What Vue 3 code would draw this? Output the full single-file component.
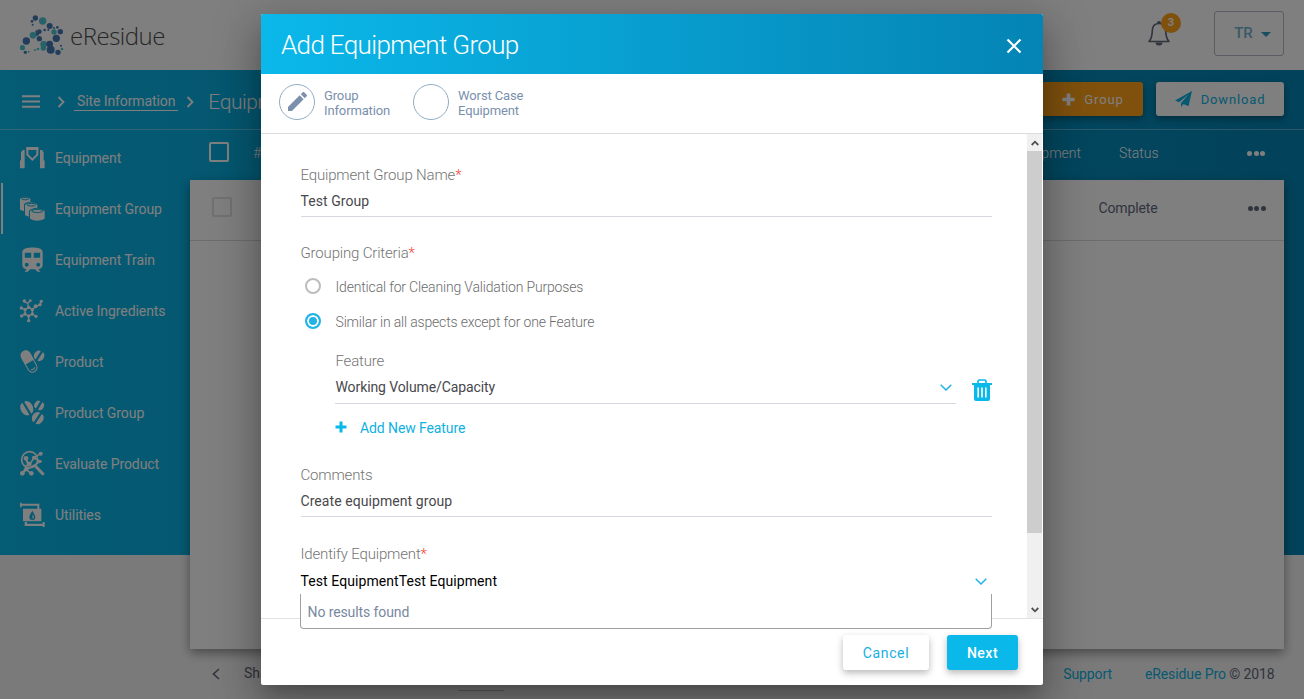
<script setup>
const navItems = [
  {
    label: 'Equipment',
    icon: '<path d="M22 11H52V29L37 44L22 29Z" fill="none" stroke="#fff" stroke-width="6"/><path d="M0 70V48L3 44V22L8 15H14V70ZM60 70V15H66L71 22V44L74 48V70Z"/><path d="M19 6H55V15H19Z"/>',
  },
  {
    label: 'Equipment Group',
    active: true,
    icon: '<path d="M0 8V41L12 46V24Q18 18 31 17V8Q16-3 0 8Z"/><ellipse cx="15.500" cy="8" rx="11" ry="3.500" fill="none" stroke="#0bb2e3" stroke-width="3"/><path d="M15 27V58L27 62V44Q34 36 52 35V26Q33 13 15 27Z"/><ellipse cx="34" cy="26" rx="13" ry="4" fill="none" stroke="#0bb2e3" stroke-width="3"/><path d="M30 45V68Q51 80 74 68V45Q52 31 30 45Z"/><ellipse cx="52" cy="45" rx="17" ry="4.500" fill="none" stroke="#0bb2e3" stroke-width="3"/>',
  },
  {
    label: 'Equipment Train',
    icon: '<path transform="translate(-8.500 -6) scale(3.830)" d="M12 2c-4 0-8 .5-8 4v9.500C4 17.430 5.570 19 7.500 19L6 20.500v.5h2.230l2-2H14l2 2h2v-.5L16.500 19c1.930 0 3.500-1.570 3.500-3.500V6c0-3.500-3.580-4-8-4zM7.500 17c-.83 0-1.500-.67-1.500-1.500S6.670 14 7.500 14s1.500.67 1.500 1.500S8.330 17 7.500 17zM11 10H6V6h5v4zm2 0V6h5v4h-5zm3.500 7c-.83 0-1.500-.67-1.500-1.500s.67-1.500 1.500-1.500 1.500.67 1.500 1.500-.67 1.500-1.500 1.500z"/>',
  },
  {
    label: 'Active Ingredients',
    icon: '<path d="M26 28L37 35V48L26 54L15 48V35ZM26 28L23 16L13 10M23 16L31 8M15 35L4 30M37 35L47 25L60 21L64 10M15 48L5 54M26 54V67M37 48L47 54" fill="none" stroke="#fff" stroke-width="4"/><g><circle cx="26" cy="28" r="5"/><circle cx="37" cy="35" r="5"/><circle cx="37" cy="48" r="5"/><circle cx="26" cy="54" r="5"/><circle cx="15" cy="48" r="5"/><circle cx="15" cy="35" r="5"/><circle cx="13" cy="9" r="5"/><circle cx="31" cy="8" r="4"/><circle cx="4" cy="30" r="5"/><circle cx="47" cy="25" r="6"/><circle cx="60" cy="20" r="5"/><circle cx="64" cy="10" r="5"/><circle cx="5" cy="54" r="5"/><circle cx="26" cy="68" r="5"/><circle cx="48" cy="55" r="5"/></g>',
  },
  {
    label: 'Product',
    icon: '<g transform="rotate(-29 27 37)"><rect x="13" y="3" width="28" height="69" rx="14" fill="none" stroke="#fff" stroke-width="3"/><path d="M12 40V17A15 15 0 0 1 42 17V40Z"/><path d="M20 61Q27 68 34 61" fill="none" stroke="#fff" stroke-width="3"/></g><g transform="rotate(32 57 20)"><path d="M54 5V35A12 15 0 0 1 54 5ZM61 5V35A12 15 0 0 0 61 5Z"/></g>',
  },
  {
    label: 'Product Group',
    icon: '<g transform="rotate(-31 20 25)"><path d="M17 4V46A15 21 0 0 1 17 4ZM24 4V46A15 21 0 0 0 24 4Z"/></g><g transform="rotate(30 57 16)"><path d="M54 3V29A11 13 0 0 1 54 3ZM61 3V29A11 13 0 0 0 61 3Z"/></g><g transform="rotate(34 53 54)"><path d="M50 37V71A14 17 0 0 1 50 37ZM57 37V71A14 17 0 0 0 57 37Z"/></g>',
  },
  {
    label: 'Evaluate Product',
    icon: '<circle cx="29" cy="26" r="24" fill="none" stroke="#fff" stroke-width="5"/><path d="M46 45L71 71" stroke="#fff" stroke-width="9"/><path d="M18 25L29 41L42 20L62 8M18 25L23 39L7 68M7 68L19 56L34 68M42 20L60 32L44 42L19 56" fill="none" stroke="#fff" stroke-width="4.500"/><circle cx="18" cy="22" r="7"/><circle cx="42" cy="20" r="6"/><circle cx="62" cy="8" r="6"/><circle cx="60" cy="31" r="5"/><circle cx="28" cy="39" r="7"/><circle cx="7" cy="67" r="7"/><circle cx="34" cy="67" r="7"/><circle cx="19" cy="55" r="6"/>',
  },
  {
    label: 'Utilities',
    icon: '<path d="M0 2H5V5H58V20H52V11H5V16H0ZM9 20H64V58H9Z"/><path d="M37 26C33 34 28 39 28 45A9 9 0 0 0 46 45C46 39 41 34 37 26Z" fill="#0bb2e3"/><path d="M38 37C42 42 44 49 37 50Z"/><path d="M14 60H21V65H68V60H74V75H68V72H14Z"/>',
  },
]

const navy = '#4478b4'
const teal = '#50c4d2'
const logoDots = [
  [46, 12, 8, navy], [36, 22, 4, navy], [38, 32, 3, navy], [68, 21, 11, teal],
  [89, 36, 9, navy], [112, 40, 4, navy], [102, 42, 3, navy], [102, 54, 8, teal],
  [121, 53, 8, navy], [58, 53, 7, navy], [74, 48, 4, navy], [85, 48, 3, navy],
  [49, 52, 3, navy], [51, 60, 6, navy], [39, 64, 10, teal], [58, 74, 8, navy],
  [19, 81, 11, navy], [7, 101, 8, teal], [16, 115, 5, navy], [26, 113, 3, teal],
  [109, 73, 11, navy], [71, 91, 10, teal], [89, 90, 10, navy], [70, 102, 8, teal],
  [92, 107, 12, navy], [114, 115, 8, navy], [126, 105, 4, teal], [123, 95, 3, navy],
  [54, 105, 4, teal], [45, 108, 3, teal],
]
</script>

<template>
  <div class="page">
    <header class="topbar">
      <svg class="logo" viewBox="0 0 132 126">
        <circle v-for="(d, i) in logoDots" :key="i" :cx="d[0]" :cy="d[1]" :r="d[2]" :fill="d[3]" />
      </svg>
      <span class="brand">eResidue</span>
      <div class="bell">
        <svg viewBox="0 0 24 26" width="24" height="26">
          <path d="M2 21.500C5.500 18 5 13 5.500 9C6 5.500 8.500 3.500 12 3.500S18 5.500 18.500 9C19 13 18.500 18 22 21.500Z" fill="none" stroke="#62687a" stroke-width="1.600" stroke-linejoin="round" />
          <path d="M10 3A2 2 0 0 1 14 3ZM8.500 22.500H15.500A3.500 3 0 0 1 8.500 22.500Z" fill="#62687a" />
        </svg>
        <span class="badge">3</span>
      </div>
      <button class="user">TR<i class="caret"></i></button>
    </header>

    <main class="main">
      <div class="crumbs">
        <svg class="burger" viewBox="0 0 17 12"><path d="M0 1H17M0 6H17M0 11H17" stroke="#fff" stroke-width="1.800" /></svg>
        <svg class="sep first" viewBox="0 0 8 12"><path d="M1.500 1L6.500 6L1.500 11" /></svg>
        <a class="link">Site Information</a>
        <svg class="sep" viewBox="0 0 8 12"><path d="M1.500 1L6.500 6L1.500 11" /></svg>
        <span class="current">Equipment Group</span>
        <button class="action orange">
          <svg viewBox="0 0 14 14" width="13" height="13"><path d="M5 0.500H9V5H13.500V9H9V13.500H5V9H0.500V5H5Z" fill="#fff" /></svg>
          Group
        </button>
        <button class="action white">
          <svg viewBox="0 0 17 16" width="17" height="16"><path d="M17 0L0 9.500L4 11.300L13.500 3.500L6 12V16L8.500 13L13.500 15.200Z" fill="#0bb2e3" /></svg>
          Download
        </button>
      </div>

      <div class="columns">
        <nav class="side">
          <a v-for="item in navItems" :key="item.label" class="nav" :class="{ active: item.active }">
            <svg viewBox="0 0 75 75" width="25" height="25" fill="#fff" v-html="item.icon"></svg>
            {{ item.label }}
          </a>
        </nav>
        <section class="content">
          <div class="thead">
            <i class="box"></i><span class="hash">#</span>
            <span class="col-eq">Equipment</span><span class="col-st">Status</span>
            <span class="dots"><i></i><i></i><i></i></span>
          </div>
          <div class="card">
            <div class="row">
              <i class="box"></i>
              <span class="status">Complete</span>
              <span class="dots"><i></i><i></i><i></i></span>
            </div>
          </div>
          <footer class="foot">
            <svg class="back" viewBox="0 0 8 12"><path d="M7 1L1.500 6L7 11" /></svg>
            <span>Share</span>
            <i class="tab"></i>
            <a class="support">Support</a>
            <span class="copy"><a>eResidue Pro</a> © 2018</span>
          </footer>
        </section>
      </div>
    </main>

    <div class="overlay">
      <div class="modal">
        <div class="m-head">
          <h1>Add Equipment Group</h1>
          <svg viewBox="0 0 16 16" width="16" height="16"><path d="M1.500 1.500L14.500 14.500M14.500 1.500L1.500 14.500" stroke="#fff" stroke-width="2.200" /></svg>
        </div>
        <div class="steps">
          <div class="step">
            <span class="ring">
              <svg viewBox="3 3 18 18" width="19" height="19"><path d="M3 17.250V21h3.750L17.810 9.940l-3.750-3.750L3 17.250zM20.710 7.040c.39-.39.39-1.020 0-1.410l-2.340-2.340c-.39-.39-1.020-.39-1.410 0l-1.830 1.830 3.750 3.750 1.830-1.830z" fill="#7a90ac" /></svg>
            </span>
            <span>Group<br>Information</span>
          </div>
          <div class="step">
            <span class="ring"></span>
            <span>Worst Case<br>Equipment</span>
          </div>
        </div>
        <div class="body">
          <div class="form">
            <div class="field">
              <label>Equipment Group Name<b>*</b></label>
              <div class="value">Test Group</div>
            </div>
            <label class="criteria">Grouping Criteria<b>*</b></label>
            <div class="radio"><i></i><span>Identical for Cleaning Validation Purposes</span></div>
            <div class="radio on"><i></i><span>Similar in all aspects except for one Feature</span></div>
            <div class="feature">
              <div class="field">
                <label>Feature</label>
                <div class="value cap">Working Volume/Capacity
                  <svg class="chev" viewBox="0 0 12 7"><path d="M0.700 0.700L6 6L11.300 0.700" /></svg>
                </div>
              </div>
              <svg class="trash" viewBox="0 0 20 22"><path d="M6 4V2.500Q6 1 7.500 1H12.500Q14 1 14 2.500V4" fill="none" stroke="#0bb8ea" stroke-width="1.700" /><path d="M0 4H20V6H18V20Q18 22 16 22H4Q2 22 2 20V6H0Z" fill="#0bb8ea" /><path d="M6.200 8.500V18.500M10 8.500V18.500M13.800 8.500V18.500" stroke="#fff" stroke-width="1.600" /></svg>
            </div>
            <div class="add">
              <svg viewBox="0 0 12 12" width="12" height="12"><path d="M4.500 0.500H7.500V4.500H11.500V7.500H7.500V11.500H4.500V7.500H0.500V4.500H4.500Z" fill="#0bb8ea" /></svg>
              Add New Feature
            </div>
            <div class="field comments">
              <label>Comments</label>
              <div class="value">Create equipment group</div>
            </div>
            <div class="identify">
              <label>Identify Equipment<b>*</b></label>
              <div class="picked">Test EquipmentTest Equipment
                <svg class="chev" viewBox="0 0 12 7"><path d="M0.700 0.700L6 6L11.300 0.700" /></svg>
              </div>
              <div class="results">No results found</div>
            </div>
          </div>
          <div class="scroll">
            <svg viewBox="0 0 8 6"><path d="M0.700 5L4 1.700L7.300 5" /></svg>
            <div class="thumb"></div>
            <svg class="down" viewBox="0 0 8 6"><path d="M0.700 1L4 4.300L7.300 1" /></svg>
          </div>
        </div>
        <div class="m-foot">
          <button class="cancel">Cancel</button>
          <button class="next">Next</button>
        </div>
      </div>
    </div>
  </div>
</template>

<style>
body { margin: 0; overflow: hidden; }
</style>

<style scoped>
* { box-sizing: border-box; }
.page { position: relative; height: 699px; overflow: hidden; background: #f5f5f5; font-family: Roboto, "Liberation Sans", sans-serif; font-size: 14px; color: #62687a; }
button { border: 0; padding: 0; font-family: inherit; }
svg { display: block; flex: none; }

.topbar { height: 70px; background: #fff; display: flex; align-items: center; padding: 0 20px; }
.logo { width: 44px; height: 42px; margin-top: -1px; }
.brand { font-family: "Open Sans", "Noto Sans", sans-serif; font-size: 24px; font-weight: 300; line-height: 32px; color: #4c4c4c; margin: 2px 0 0 6px; letter-spacing: -0.5px; }
.bell { position: relative; margin: -4px 0 0 auto; }
.badge { position: absolute; left: 14px; top: -7px; width: 20px; height: 20px; border-radius: 50%; background: #ffa21a; color: #fff; font-size: 11px; font-weight: 700; line-height: 20px; text-align: center; }
.user { width: 70px; height: 45px; margin: -3px 0 0 43px; border: 1px solid #b4bac9; border-radius: 3px; background: #fff; color: #6cb4ce; font-size: 15px; font-weight: 500; display: flex; align-items: center; justify-content: center; gap: 8px; padding: 0 0 2px 7px; }
.caret { border: 5px solid transparent; border-top-color: #2f9cc4; border-bottom: 0; margin-top: 3px; }

.main { height: 629px; background: linear-gradient(90deg, #0bb8ea, #0484b4) no-repeat 0 0 / 100% 485px; }
.crumbs { height: 60px; border-bottom: 1px solid rgba(255, 255, 255, .35); display: flex; align-items: center; padding: 0 20px 0 22px; color: #fff; }
.burger { width: 18px; height: 13px; margin-top: 4px; }
.sep { width: 8px; height: 12px; fill: none; stroke: #fff; stroke-width: 1.8; margin: 5px 14px 0 8px; }
.sep.first { margin: 5px 9px 0 17px; }
.link { font-size: 14px; line-height: 18px; border-bottom: 1px solid #fff; padding: 0 3px; margin-top: 4px; letter-spacing: -.1px; white-space: nowrap; }
.current { font-size: 21px; font-weight: 300; margin-top: 4px; letter-spacing: -.45px; white-space: nowrap; width: 300px; }
.action { height: 34px; border-radius: 3px; display: flex; align-items: center; justify-content: center; gap: 9px; font-size: 13px; font-weight: 400; letter-spacing: .85px; box-shadow: 0 3px 7px rgba(0, 0, 0, .35); margin-bottom: 1px; }
.orange { width: 103px; margin-left: auto; background: #ffa21a; color: #fff; padding-left: 3px; }
.white { width: 128px; margin-left: 13px; background: #fff; color: #0bb2e3; }

.columns { display: flex; }
.side { width: 190px; padding-top: 2px; }
.nav { height: 51px; display: flex; align-items: center; gap: 10px; padding-left: 20px; color: #fff; white-space: nowrap; letter-spacing: -.07px; }
.nav.active { box-shadow: inset 1px 0 #0bb2e3, inset 3px 0 #fff; }
.nav svg { overflow: visible; }
.content { flex: 1; min-width: 0; margin-right: 20px; }
.thead { height: 50px; display: flex; align-items: center; color: #fff; padding: 0 19px 4px 19px; font-weight: 300; }
.box { width: 20px; height: 20px; border: 2px solid #fff; border-radius: 2px; flex: none; margin-bottom: 2px; }
.hash { margin-left: 24px; }
.col-eq { margin-left: auto; }
.col-st { width: 128px; margin-left: 38px; }
.dots { display: flex; gap: 1.500px; }
.dots i { width: 5px; height: 5px; border-radius: 50%; background: currentColor; }
.card { height: 469px; background: #fff; box-shadow: 0 4px 10px rgba(0, 0, 0, .4); }
.row { height: 61px; border-bottom: 1px solid #dadada; display: flex; align-items: center; padding: 0 18.500px 5px 22px; }
.row .box { border-color: #e2e2e2; }
.status { margin-left: auto; width: 149px; letter-spacing: -.12px; }
.row .dots { margin-top: 2px; }
.foot { height: 48px; display: flex; align-items: center; padding-left: 22px; white-space: nowrap; }
.back { width: 8px; height: 12px; margin: 1px 24px 0 0; fill: none; stroke: #62687a; stroke-width: 1.6; }
.tab { width: 45px; height: 1px; margin: 34px 0 0 179px; background: #bbb; }
.foot a { color: #0bb2e3; }
.support { margin-left: auto; }
.foot .support, .copy { padding-top: 1px; letter-spacing: -.1px; }
.copy { margin: 0 9.500px 0 33px; }

.overlay { position: absolute; inset: 0; background: rgba(0, 0, 0, .5); display: flex; justify-content: center; align-items: flex-start; padding-top: 14px; }
.modal { width: 782px; height: 671px; background: #fff; border-radius: 2px; display: flex; flex-direction: column; box-shadow: 0 11px 15px -7px rgba(0, 0, 0, .2), 0 24px 38px 3px rgba(0, 0, 0, .14), 0 9px 46px 8px rgba(0, 0, 0, .18); }
.m-head { height: 60px; display: flex; align-items: center; justify-content: space-between; padding: 2px 21px 0 20px; background: linear-gradient(90deg, #0bb8ea, #0484b4); border-radius: 2px 2px 0 0; color: #fff; }
h1 { margin: 0; font-size: 26px; font-weight: 300; line-height: 34px; letter-spacing: -.66px; }
.m-head svg { margin-top: 1px; }
.steps { height: 60px; border-bottom: 1px solid #dcdcdc; display: flex; align-items: center; gap: 23px; padding: 0 0 3px 18px; }
.step { display: flex; align-items: center; gap: 9px; color: #7a90ac; font-size: 13px; line-height: 15px; padding-top: 1px; letter-spacing: -.13px; }
.ring { width: 36px; height: 36px; margin-bottom: 2px; border: 1px solid #8fadc4; border-radius: 50%; display: flex; align-items: center; justify-content: center; }
.body { height: 484px; display: flex; }
.form { flex: 1; min-width: 0; padding: 31px 35px 0 39.500px; }
label { display: block; height: 20px; line-height: 20px; font-size: 15px; font-weight: 300; color: #747474; white-space: nowrap; letter-spacing: -.17px; }
label b { color: #f44336; font-weight: 300; }
.value { height: 32px; padding-top: 6px; line-height: 20px; color: #48484c; border-bottom: 1px solid #d6d8e0; display: flex; justify-content: space-between; letter-spacing: .07px; }
.value.cap { height: 33px; letter-spacing: -.1px; padding-left: .5px; }
.criteria { margin-top: 26px; }
.radio { height: 35px; display: flex; align-items: center; padding-left: 4px; color: #6c6c6c; font-weight: 300; letter-spacing: -.17px; }
.criteria + .radio { margin-top: 6px; }
.radio i { width: 16px; height: 16px; border: 2px solid #bdbdbd; border-radius: 50%; margin: 0 15px 2px 0; }
.radio.on i { border-color: #22b4e6; background: #22b4e6; box-shadow: inset 0 0 0 2px #fff; }
.feature { display: flex; padding-left: 34.500px; margin-top: 12px; }
.feature .field { width: 621px; flex: none; }
.feature label { padding-left: .5px; }
.trash { width: 20px; height: 22px; margin: 28px 0 0 16px; }
.chev { width: 12px; height: 7px; margin: 7px 4px 0 0; fill: none; stroke: #22b4e6; stroke-width: 1.500; }
.add { display: flex; align-items: center; gap: 13px; height: 20px; margin: 14px 0 0 34.500px; color: #0fb0e2; letter-spacing: -.1px; }
.add svg { margin-bottom: 2px; }
.comments { margin-top: 27px; }
.identify { margin-top: 27px; }
.picked { height: 27px; padding-top: 7px; line-height: 20px; color: #000; display: flex; justify-content: space-between; margin-bottom: 3px; letter-spacing: .08px; }
.picked .chev { margin-right: 5px; }
.results { height: 35px; margin-left: -.5px; border: 1px solid #a0a0a0; border-top: 0; border-radius: 0 0 4px 4px; background: #fff; color: #7888a0; line-height: 36px; padding-left: 6.500px; letter-spacing: -.1px; position: relative; }
.scroll { flex: none; width: 15px; margin-right: 1px; background: #f0f0f0; display: flex; flex-direction: column; align-items: center; }
.scroll svg { width: 8px; height: 6px; margin: 6px 0 5px; fill: none; stroke: #505050; stroke-width: 1.8; }
.thumb { width: 100%; height: 382px; background: #cdcdcd; }
.scroll .down { margin-top: auto; margin-bottom: 5px; }
.m-foot { height: 67px; border-top: 1px solid #e2e2e2; display: flex; justify-content: flex-end; gap: 18px; padding: 16px 25px 0 0; }
.m-foot button { height: 35px; border-radius: 3px; font-size: 14px; font-weight: 500; letter-spacing: .5px; box-shadow: 0 3px 7px rgba(0, 0, 0, .28); }
.m-foot .cancel { width: 86px; background: #fff; color: #18aee2; font-weight: 400; letter-spacing: .65px; }
.next { width: 71px; background: #0bb8ea; color: #fff; }
</style>
